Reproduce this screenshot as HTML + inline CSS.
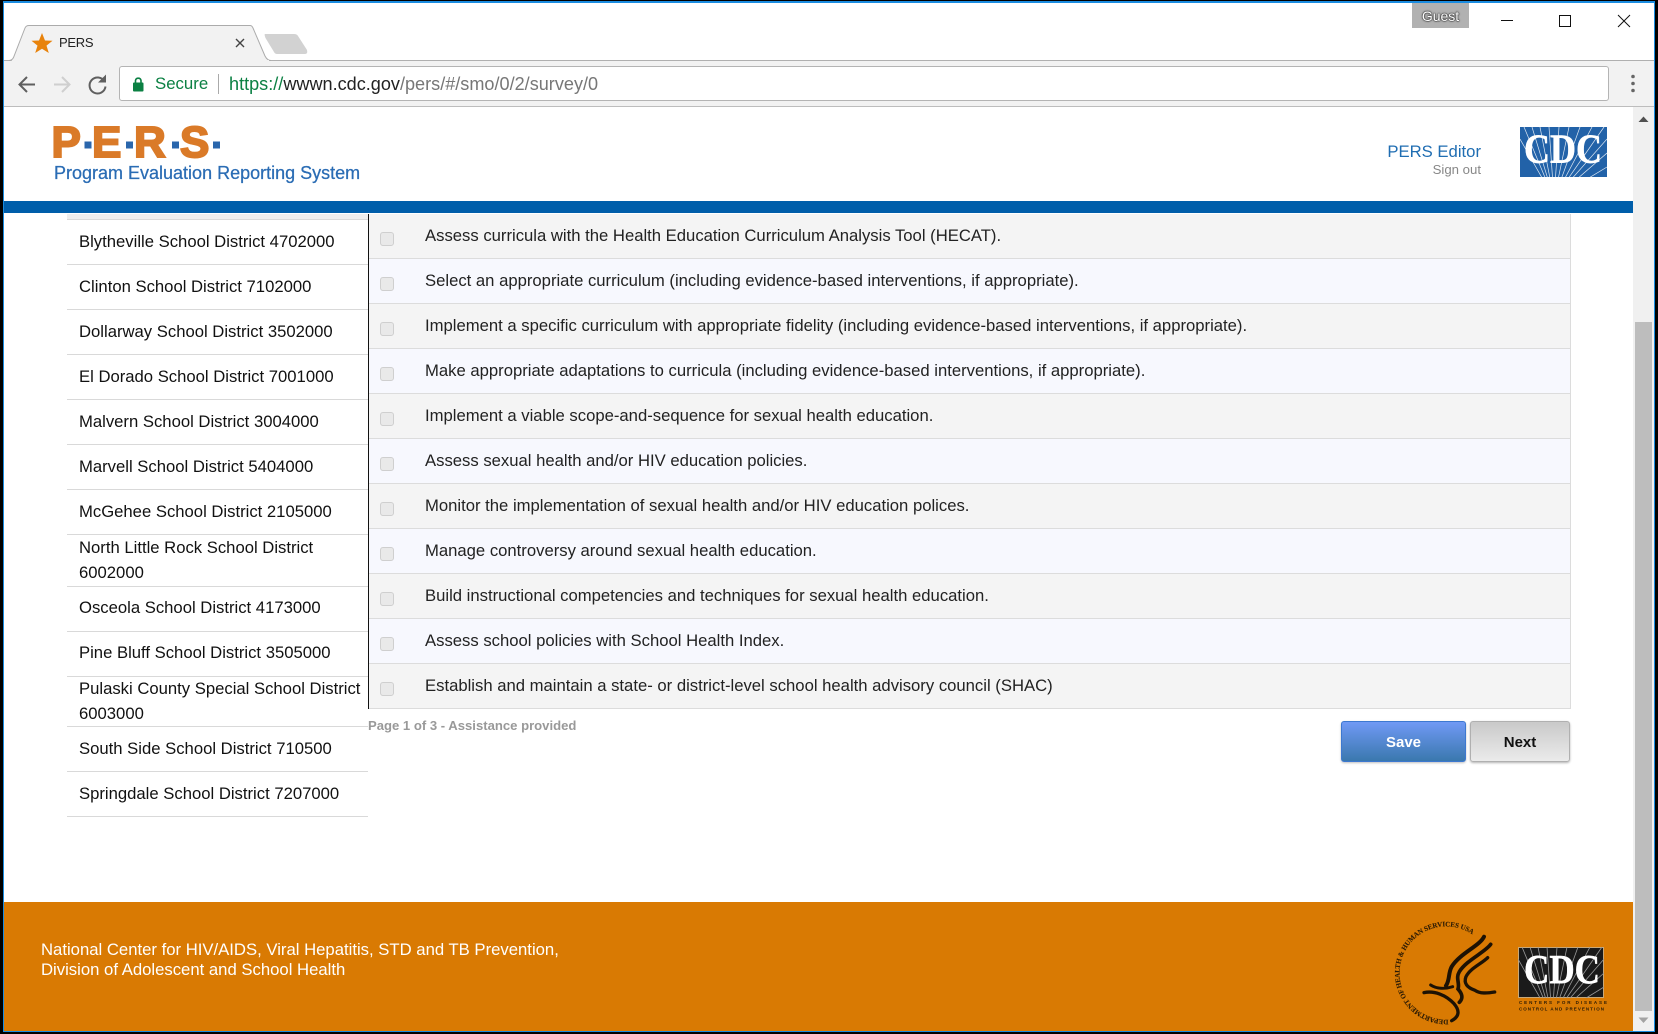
<!DOCTYPE html>
<html lang="en">
<head>
<meta charset="utf-8">
<title>PERS</title>
<style>
html,body{margin:0;padding:0;width:1658px;height:1034px;overflow:hidden;background:#fff}
body{font-family:"Liberation Sans",Arial,sans-serif;position:relative;color:#111}
.a{position:absolute}
.t{position:absolute;white-space:nowrap}
.li{position:absolute;left:67px;width:301px;border-bottom:1px solid #d9d9d9;box-sizing:border-box}
.li span{position:absolute;left:12px;font-size:16.67px;line-height:25px;color:#111;white-space:nowrap}
.row{position:absolute;left:369px;width:1202px;height:45px;box-sizing:border-box;border-bottom:1px solid #dcdcdc;border-right:1px solid #dcdcdc;font-size:16.67px;line-height:44px;color:#222}
.row span{position:absolute;left:56px;top:0;white-space:nowrap}
.row i{position:absolute;left:11px;top:18px;width:14px;height:14px;box-sizing:border-box;background:#e9e9e9;border:1px solid #cfcfcf;border-radius:3px}
.o{background:#f4f4f4}.e{background:#f7f8fe}
.btn{position:absolute;top:721px;height:41px;box-sizing:border-box;border-radius:3px;text-align:center;font-weight:bold;font-size:15px;line-height:41px}
</style>
</head>
<body>
<!-- window chrome -->
<div class="a" style="left:0;top:60px;width:1658px;height:47px;background:#f2f2f2;border-top:1px solid #b0b0b0;border-bottom:1px solid #bdbdbd;box-sizing:border-box"></div>
<svg class="a" style="left:0;top:0" width="320" height="64" viewBox="0 0 320 64">
<path d="M9 60.5 C11 60.500 12.500 59.500 13.500 57.500 L25 28 Q26 25.500 29 25.500 L250 25.500 Q252 25.500 253 28 L265 56 C266.500 59 268 60.500 271 60.500" fill="#f2f2f2" stroke="#ababab" stroke-width="1"/>
<path d="M12 61 H269" stroke="#f2f2f2" stroke-width="2"/>
<path d="M42 33 L45 40.500 L52.500 40.800 L46.500 45.600 L48.800 53 L42 48.800 L35.200 53 L37.500 45.600 L31.500 40.800 L39 40.500 Z" fill="#e8830c"/>
<path d="M236 39 L244 47 M244 39 L236 47" stroke="#444" stroke-width="1.400" fill="none"/>
<path d="M265 34 H294 Q297 34 298 36 L307 50 Q308 54 305 54 H277 Q275 54 274 52 L265.500 38 Q264 34 265 34 Z" fill="#d2d2d2"/>
</svg>
<div class="t" style="left:59px;top:34px;font-size:13px;line-height:18px;letter-spacing:-.3px;color:#222">PERS</div>
<!-- toolbar icons -->
<svg class="a" style="left:0;top:62px" width="125" height="44" viewBox="0 0 125 44">
<path d="M35 22.500 H20 M27 15 L19.500 22.500 L27 30" stroke="#5f5f5f" stroke-width="2" fill="none"/>
<path d="M54 22.500 H69 M62 15 L69.500 22.500 L62 30" stroke="#cfcfcf" stroke-width="2" fill="none"/>
<path d="M104.500 19.500 A8 8 0 1 0 105.500 24.500" stroke="#5f5f5f" stroke-width="2" fill="none"/>
<path d="M106 12.500 V20.500 H98 Z" fill="#5f5f5f"/>
</svg>
<div class="a" style="left:119px;top:66px;width:1490px;height:35px;background:#fff;border:1px solid #b4b4b4;border-radius:3px;box-sizing:border-box"></div>
<svg class="a" style="left:130px;top:75px" width="16" height="18" viewBox="0 0 16 18">
<path d="M5.500 8 V5.500 A2.800 2.800 0 0 1 11 5.500 V8" stroke="#0b8043" stroke-width="1.600" fill="none"/>
<rect x="3" y="7.500" width="10.500" height="9" rx="1" fill="#0b8043"/>
</svg>
<div class="t" style="left:155px;top:73px;font-size:16.800px;line-height:22px;color:#0b8043">Secure</div>
<div class="a" style="left:218px;top:74px;width:1px;height:20px;background:#aaa"></div>
<div class="t" style="left:229px;top:73px;font-size:18.100px;line-height:22px;color:#777"><span style="color:#0b8043">https://</span><span style="color:#222">wwwn.cdc.gov</span>/pers/#/smo/0/2/survey/0</div>
<svg class="a" style="left:1629px;top:72px" width="8" height="24" viewBox="0 0 8 24"><circle cx="4" cy="4.500" r="1.800" fill="#666"/><circle cx="4" cy="11.500" r="1.800" fill="#666"/><circle cx="4" cy="18.500" r="1.800" fill="#666"/></svg>
<div class="a" style="left:1412px;top:3px;width:57px;height:25px;background:#b1b1b1"></div>
<div class="t" style="left:1412px;top:5px;width:57px;text-align:center;font-size:14px;line-height:22px;color:#fff;text-shadow:0 0 2px #222,0 0 1px #222,0 0 1px #222">Guest</div>
<svg class="a" style="left:1490px;top:8px" width="150" height="24" viewBox="0 0 150 24">
<path d="M11 12.500 H23" stroke="#111" stroke-width="1"/>
<rect x="69.500" y="7.500" width="11" height="11" fill="none" stroke="#111" stroke-width="1"/>
<path d="M128 7 L140 19 M140 7 L128 19" stroke="#111" stroke-width="1" fill="none"/>
</svg>

<!-- header -->
<svg class="a" style="left:50px;top:118px" width="180" height="46" viewBox="0 0 180 46">
<g font-family="Liberation Sans,Arial,sans-serif" font-weight="bold" font-size="44" fill="#da7a28" stroke="#da7a28" stroke-width="2">
<text x="1.500" y="39">P</text><text x="42" y="39">E</text><text x="84" y="39">R</text><text x="130" y="39">S</text>
</g>
<rect x="34.500" y="23.500" width="7" height="7" fill="#2a66ac"/><rect x="76" y="23.500" width="7" height="7" fill="#2a66ac"/><rect x="122" y="23.500" width="7" height="7" fill="#2a66ac"/><rect x="163" y="23.500" width="7" height="7" fill="#2a66ac"/>
</svg>
<div class="t" style="left:54px;top:162px;font-size:18px;line-height:22px;color:#2a6cb4;-webkit-text-stroke:0.25px #2a6cb4">Program Evaluation Reporting System</div>
<div class="t" style="right:177px;top:142px;font-size:16.700px;line-height:20px;color:#1f6db2">PERS Editor</div>
<div class="t" style="right:177px;top:161px;font-size:13.200px;line-height:18px;color:#888">Sign out</div>
<svg class="a" style="left:1520px;top:127px" width="87" height="50" viewBox="0 0 87 50">
<rect width="87" height="50" fill="#2262a8"/>
<g stroke="#dfe9f4" stroke-width="0.700" fill="none">
<path d="M34 72 L4 0 M34 72 L12 0 M34 72 L20 0 M34 72 L29 0 M34 72 L39 0 M34 72 L49 0 M34 72 L60 0 M34 72 L72 0 M34 72 L84 0 M34 72 L87 12 M34 72 L87 26 M34 72 L87 40 M34 72 L0 12"/>
</g>
<text transform="translate(4 35.500) scale(1 1.120)" font-family="Liberation Serif,serif" font-weight="bold" font-size="37" fill="#fff" stroke="#fff" stroke-width="0.500" textLength="78" lengthAdjust="spacingAndGlyphs">CDC</text>
</svg>
<div class="a" style="left:4px;top:201px;width:1629px;height:12px;background:#005eaa"></div>

<!-- left list -->
<div class="a" style="left:67px;top:214px;width:301px;height:5px;background:#eee"></div>
<div class="a" style="left:67px;top:219px;width:301px;height:1px;background:#d9d9d9"></div>
<div class="li" style="top:220px;height:45px"><span style="top:9px">Blytheville School District 4702000</span></div>
<div class="li" style="top:265px;height:45px"><span style="top:9px">Clinton School District 7102000</span></div>
<div class="li" style="top:310px;height:45px"><span style="top:9px">Dollarway School District 3502000</span></div>
<div class="li" style="top:355px;height:45px"><span style="top:9px">El Dorado School District 7001000</span></div>
<div class="li" style="top:400px;height:45px"><span style="top:9px">Malvern School District 3004000</span></div>
<div class="li" style="top:445px;height:45px"><span style="top:9px">Marvell School District 5404000</span></div>
<div class="li" style="top:490px;height:45px"><span style="top:9px">McGehee School District 2105000</span></div>
<div class="li" style="top:535px;height:52px"><span style="top:0;white-space:normal;width:290px">North Little Rock School District 6002000</span></div>
<div class="li" style="top:587px;height:45px"><span style="top:8px">Osceola School District 4173000</span></div>
<div class="li" style="top:632px;height:45px"><span style="top:8px">Pine Bluff School District 3505000</span></div>
<div class="li" style="top:677px;height:50px"><span style="top:-1px;white-space:normal;width:290px">Pulaski County Special School District 6003000</span></div>
<div class="li" style="top:727px;height:45px"><span style="top:9px">South Side School District 710500</span></div>
<div class="li" style="top:772px;height:45px"><span style="top:9px">Springdale School District 7207000</span></div>

<!-- table -->
<div class="row o" style="top:214px"><i></i><span>Assess curricula with the Health Education Curriculum Analysis Tool (HECAT).</span></div>
<div class="row e" style="top:259px"><i></i><span>Select an appropriate curriculum (including evidence-based interventions, if appropriate).</span></div>
<div class="row o" style="top:304px"><i></i><span>Implement a specific curriculum with appropriate fidelity (including evidence-based interventions, if appropriate).</span></div>
<div class="row e" style="top:349px"><i></i><span>Make appropriate adaptations to curricula (including evidence-based interventions, if appropriate).</span></div>
<div class="row o" style="top:394px"><i></i><span>Implement a viable scope-and-sequence for sexual health education.</span></div>
<div class="row e" style="top:439px"><i></i><span>Assess sexual health and/or HIV education policies.</span></div>
<div class="row o" style="top:484px"><i></i><span>Monitor the implementation of sexual health and/or HIV education polices.</span></div>
<div class="row e" style="top:529px"><i></i><span>Manage controversy around sexual health education.</span></div>
<div class="row o" style="top:574px"><i></i><span>Build instructional competencies and techniques for sexual health education.</span></div>
<div class="row e" style="top:619px"><i></i><span>Assess school policies with School Health Index.</span></div>
<div class="row o" style="top:664px"><i></i><span>Establish and maintain a state- or district-level school health advisory council (SHAC)</span></div>
<div class="a" style="left:368px;top:214px;width:1px;height:495px;background:#111"></div>

<div class="t" style="left:368px;top:717px;font-size:13.100px;line-height:17px;font-weight:bold;color:#999">Page 1 of 3 - Assistance provided</div>
<div class="btn" style="left:1341px;width:125px;color:#fff;border:1px solid #3d78d0;background:linear-gradient(#7099f5,#3a78ae);box-shadow:0 1px 2px rgba(0,0,0,.25)">Save</div>
<div class="btn" style="left:1470px;width:100px;color:#111;border:1px solid #b0b0b0;background:linear-gradient(#c9c9c9,#ebebeb);box-shadow:0 1px 2px rgba(0,0,0,.3)">Next</div>

<!-- scrollbar -->
<div class="a" style="left:1633px;top:107px;width:21px;height:925px;background:#f0f0f0"></div>
<div class="a" style="left:1635px;top:322px;width:17px;height:689px;background:#bdbdbd"></div>
<svg class="a" style="left:1633px;top:112px" width="21" height="12" viewBox="0 0 21 12"><path d="M5.500 10 L10.500 4.500 L15.500 10 Z" fill="#505050"/></svg>
<svg class="a" style="left:1633px;top:1014px" width="21" height="12" viewBox="0 0 21 12"><path d="M5.500 3.500 L15.500 3.500 L10.500 9 Z" fill="#a3a3a3"/></svg>

<!-- footer -->
<div class="a" style="left:4px;top:902px;width:1629px;height:130px;background:#d97a03"></div>
<div class="t" style="left:41px;top:940px;font-size:16.700px;line-height:20px;color:#fff">National Center for HIV/AIDS, Viral Hepatitis, STD and TB Prevention,<br>Division of Adolescent and School Health</div>
<svg class="a" style="left:1380px;top:915px" width="130" height="115" viewBox="0 0 390 345">
<defs><path id="arc" d="M205 314 A140 140 0 1 1 304 82"/></defs>
<text font-family="Liberation Serif,serif" font-weight="bold" font-size="21" letter-spacing="-0.300" fill="#2a1a05" stroke="#2a1a05" stroke-width="0.300"><textPath href="#arc">DEPARTMENT OF HEALTH &amp; HUMAN SERVICES USA</textPath></text>
<g fill="none" stroke="#1d1204" stroke-linecap="round">
<path d="M312 65 C300 92 240 115 215 155 C204 175 210 195 198 212" stroke-width="12"/>
<path d="M332 88 C315 112 260 135 238 170 C226 190 240 205 234 222 C250 240 248 252 238 262" stroke-width="11"/>
<path d="M323 128 C305 146 270 160 258 185 C250 205 262 218 285 226 C300 236 320 235 344 231" stroke-width="10"/>
<path d="M152 210 C170 222 195 222 218 215" stroke-width="9"/>
<path d="M132 233 C162 226 198 240 222 266 C240 287 238 305 215 317" stroke-width="10"/>
</g>
</svg>
<svg class="a" style="left:1518px;top:947px" width="86" height="51" viewBox="0 0 86 51">
<rect x="0.500" y="0.500" width="85" height="50" fill="#1a1a1a" stroke="#c8a878" stroke-width="1"/>
<g stroke="#999" stroke-width="0.800" fill="none">
<path d="M34 72 L4 0 M34 72 L12 0 M34 72 L20 0 M34 72 L29 0 M34 72 L39 0 M34 72 L49 0 M34 72 L60 0 M34 72 L72 0 M34 72 L84 0 M34 72 L86 12 M34 72 L86 26 M34 72 L86 40 M34 72 L0 12"/>
</g>
<text transform="translate(6 36) scale(1 1.120)" font-family="Liberation Serif,serif" font-weight="bold" font-size="37" fill="#fff" stroke="#fff" stroke-width="0.500" textLength="76" lengthAdjust="spacingAndGlyphs">CDC</text>
</svg>
<svg class="a" style="left:1518px;top:998px" width="92" height="16" viewBox="0 0 92 16">
<text x="1" y="6" font-family="Liberation Sans,sans-serif" font-weight="bold" font-size="4.500" fill="#2a1a05" textLength="88" lengthAdjust="spacing">CENTERS FOR DISEASE</text>
<text x="1" y="12.500" font-family="Liberation Sans,sans-serif" font-weight="bold" font-size="4.500" fill="#2a1a05" textLength="85" lengthAdjust="spacing">CONTROL AND PREVENTION</text>
</svg>

<!-- window border -->
<div class="a" style="left:0;top:0;width:3px;height:1034px;background:#000"></div>
<div class="a" style="left:3px;top:1px;width:1px;height:1031px;background:#1a8ce0"></div>
<div class="a" style="left:0;top:0;width:1658px;height:1px;background:#000"></div>
<div class="a" style="left:3px;top:1px;width:1652px;height:2px;background:#1a8ce0"></div>
<div class="a" style="left:1655px;top:0;width:3px;height:1034px;background:#000"></div>
<div class="a" style="left:1654px;top:1px;width:1px;height:1031px;background:#1a8ce0"></div>
<div class="a" style="left:0;top:1032px;width:1658px;height:2px;background:#000"></div>
<div class="a" style="left:3px;top:1031px;width:1652px;height:1px;background:#1a8ce0"></div>
</body>
</html>
